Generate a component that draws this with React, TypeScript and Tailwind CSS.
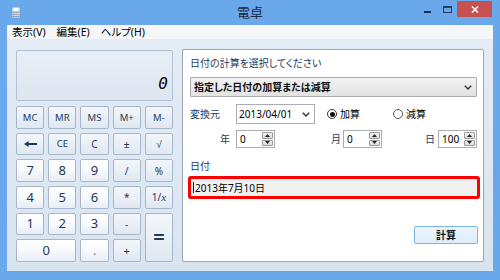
import React from "react";

const JP = "font-['Noto_Sans','Noto_Sans_CJK_JP',sans-serif] [font-feature-settings:'palt']";

function CalcBtn({
  label,
  op = false,
  className = "",
  textClass = "text-[13px]",
}: {
  label: React.ReactNode;
  op?: boolean;
  className?: string;
  textClass?: string;
}) {
  return (
    <div
      className={`flex items-center justify-center rounded-[2px] border border-[#a7b7ca] text-[#1e395b] leading-none ${textClass} ${
        op
          ? "bg-linear-to-b from-[#f3f6fa] via-[#eaf0f7] to-[#dfe7f1]"
          : "bg-linear-to-b from-[#ffffff] via-[#f7f9fc] to-[#e8eef6]"
      } ${className}`}
    >
      {label}
    </div>
  );
}

function Spin({ value }: { value: string }) {
  return (
    <div className="w-[39px] h-[18px] border border-[#abadb3] bg-white flex">
      <span className="flex-1 pl-[3px] text-[10px] leading-[16px] text-black">{value}</span>
      <div className="w-[13px] flex flex-col gap-[1px] p-[1px]">
        <div className="flex-1 rounded-[1px] border border-[#9a9a9a] bg-linear-to-b from-[#f4f4f4] to-[#dcdcdc] flex items-center justify-center">
          <svg width="5" height="3" viewBox="0 0 5 3">
            <polygon points="2.5,0 5,3 0,3" fill="#222" />
          </svg>
        </div>
        <div className="flex-1 rounded-[1px] border border-[#9a9a9a] bg-linear-to-b from-[#f4f4f4] to-[#dcdcdc] flex items-center justify-center">
          <svg width="5" height="3" viewBox="0 0 5 3">
            <polygon points="0,0 5,0 2.5,3" fill="#222" />
          </svg>
        </div>
      </div>
    </div>
  );
}

function Chevron() {
  return (
    <svg width="8" height="5" viewBox="0 0 8 5">
      <polyline points="0.8,0.8 4,4 7.2,0.8" fill="none" stroke="#333" strokeWidth="1.4" />
    </svg>
  );
}

export default function App() {
  return (
    <div className={`w-[500px] h-[280px] bg-[#6aa8ec] flex flex-col px-[7px] pb-[9px] overflow-hidden ${JP}`}>
      {/* Title bar */}
      <div className="h-[26px] grid grid-cols-[1fr_auto_1fr]">
        <div className="pl-[5px] pt-[7px]">
          <svg width="8" height="11" viewBox="0 0 8 11">
            <rect x="0" y="0" width="8" height="11" fill="#dbe8f6" stroke="#7c98b8" strokeWidth="0.8" />
            <rect x="1" y="1" width="6" height="2.5" fill="#ffffff" />
            <rect x="1" y="4.5" width="1.5" height="1.3" fill="#6b8bb0" />
            <rect x="3.3" y="4.5" width="1.5" height="1.3" fill="#6b8bb0" />
            <rect x="5.5" y="4.5" width="1.5" height="1.3" fill="#6b8bb0" />
            <rect x="1" y="6.7" width="1.5" height="1.3" fill="#6b8bb0" />
            <rect x="3.3" y="6.7" width="1.5" height="1.3" fill="#6b8bb0" />
            <rect x="5.5" y="6.7" width="1.5" height="1.3" fill="#e08a3a" />
            <rect x="1" y="8.8" width="1.5" height="1.3" fill="#6b8bb0" />
            <rect x="3.3" y="8.8" width="1.5" height="1.3" fill="#6b8bb0" />
            <rect x="5.5" y="8.8" width="1.5" height="1.3" fill="#6b8bb0" />
          </svg>
        </div>
        <div className="flex items-center text-[13px] text-[#1c2a44] leading-none pb-[1px]">電卓</div>
        <div className="flex justify-end items-start pt-[1px] pr-[1px]">
          <div className="w-[20px] h-[16px] flex items-center justify-center">
            <div className="w-[7px] h-[2px] bg-[#1c2a44] mt-[6px]" />
          </div>
          <div className="w-[20px] h-[16px] flex items-center justify-center">
            <div className="w-[9px] h-[7px] border border-[#2a3b55] border-t-2" />
          </div>
          <div className="w-[35px] h-[16px] bg-[#c75050] flex items-center justify-center">
            <svg width="8" height="7" viewBox="0 0 8 7">
              <path d="M1 0.5 L7 6.5 M7 0.5 L1 6.5" stroke="#fff" strokeWidth="1.6" />
            </svg>
          </div>
        </div>
      </div>

      {/* Menu bar */}
      <div className="h-[15px] bg-[#f5f6f7] border-b border-[#e6ebf1] flex items-center gap-[11px] pl-[5px] text-[10.5px] leading-none text-black">
        <span>表示(V)</span>
        <span>編集(E)</span>
        <span>ヘルプ(H)</span>
      </div>

      {/* Main */}
      <div className="flex-1 bg-linear-to-b from-[#e4ecf5] to-[#d9e4f1] flex gap-[9px] p-[9px]">
        {/* Calculator */}
        <div className="w-[157px] flex flex-col">
          <div className="mt-[1px] h-[51px] rounded-[2px] border border-[#b2c1d3] bg-linear-to-b from-[#e8eef6] to-[#dde6f1] flex items-end justify-end pr-[4px] pb-[8px]">
            <span className="font-['DejaVu_Sans_Mono',monospace] italic text-[16px] leading-none text-black">0</span>
          </div>
          <div className="mt-[5px] h-[156px] grid grid-cols-5 grid-rows-6 gap-x-[4px] gap-y-[4px] font-['Noto_Sans',sans-serif]">
            <CalcBtn label="MC" op textClass="text-[9.5px]" />
            <CalcBtn label="MR" op textClass="text-[9.5px]" />
            <CalcBtn label="MS" op textClass="text-[9.5px]" />
            <CalcBtn label="M+" op textClass="text-[9.5px]" />
            <CalcBtn label="M-" op textClass="text-[9.5px]" />

            <CalcBtn
              op
              label={
                <svg width="13" height="6" viewBox="0 0 13 6">
                  <polygon points="0,3 4.5,0 4.5,2 13,2 13,4 4.5,4 4.5,6" fill="#1e395b" />
                </svg>
              }
            />
            <CalcBtn label="CE" op textClass="text-[9.5px]" />
            <CalcBtn label="C" op textClass="text-[10px]" />
            <CalcBtn label="±" op textClass="text-[10px]" />
            <CalcBtn label="√" op textClass="text-[10px]" />

            <CalcBtn label="7" />
            <CalcBtn label="8" />
            <CalcBtn label="9" />
            <CalcBtn label="/" op textClass="text-[10px]" />
            <CalcBtn label="%" op textClass="text-[10px]" />

            <CalcBtn label="4" />
            <CalcBtn label="5" />
            <CalcBtn label="6" />
            <CalcBtn label="*" op textClass="text-[10px]" />
            <CalcBtn
              op
              textClass="text-[10px]"
              label={
                <span>
                  1/<span className="italic font-['Liberation_Serif',serif] text-[11px]">x</span>
                </span>
              }
            />

            <CalcBtn label="1" />
            <CalcBtn label="2" />
            <CalcBtn label="3" />
            <CalcBtn label="-" op textClass="text-[10px]" />
            <CalcBtn label="=" op className="row-span-2" textClass="text-[20px] font-bold" />

            <CalcBtn label="0" className="col-span-2" />
            <CalcBtn label="." textClass="text-[10px]" />
            <CalcBtn label="+" op textClass="text-[11px]" />
          </div>
        </div>

        {/* Date panel */}
        <div className="w-[302px] bg-white border border-[#9ea9b6] rounded-[2px] shadow-[0_0_1px_rgba(0,0,0,0.15)] flex flex-col pl-[7px] pr-[6px] pt-[5px] text-[10px]">
          <div className="h-[16px] leading-[16px] text-[#1e395b]">日付の計算を選択してください</div>

          <div className="mt-[6px] h-[20px] border border-[#acacac] rounded-[1px] bg-linear-to-b from-[#f2f2f2] to-[#e2e2e2] flex items-center pl-[3px] pr-[4px]">
            <span className="flex-1 font-bold text-[#111] leading-none">指定した日付の加算または減算</span>
            <Chevron />
          </div>

          <div className="mt-[7px] h-[20px] flex items-center">
            <span className="w-[46px] text-[#1e395b] leading-none">変換元</span>
            <div className="w-[79px] h-[20px] border border-[#abadb3] bg-white flex items-center pl-[2px] pr-[4px]">
              <span className="flex-1 leading-none text-black">2013/04/01</span>
              <Chevron />
            </div>
            <div className="ml-[12px] flex items-center">
              <div className="w-[10px] h-[10px] rounded-full border border-[#333] flex items-center justify-center">
                <div className="w-[5px] h-[5px] rounded-full bg-[#111]" />
              </div>
              <span className="ml-[3px] leading-none text-black">加算</span>
            </div>
            <div className="ml-[33px] flex items-center">
              <div className="w-[10px] h-[10px] rounded-full border border-[#555] bg-white" />
              <span className="ml-[3px] leading-none text-black">減算</span>
            </div>
          </div>

          <div className="mt-[6px] h-[18px] flex items-center">
            <span className="ml-[30px] w-[12px] leading-none text-[#1e395b]">年</span>
            <div className="ml-[4px]">
              <Spin value="0" />
            </div>
            <span className="ml-[56px] w-[12px] leading-none text-[#1e395b]">月</span>
            <Spin value="0" />
            <span className="ml-[43px] w-[12px] leading-none text-[#1e395b]">日</span>
            <div className="ml-[1px]">
              <Spin value="100" />
            </div>
          </div>

          <div className="mt-[10px] h-[16px] leading-[16px] text-[#1e395b]">日付</div>

          <div className="mt-[2px] ml-[-2px] mr-[-3px] h-[23px] border-[3px] border-[#ff0000] rounded-[3px] bg-[#f0f0f0] flex items-center pl-[2px]">
            <span className="w-[1px] h-[11px] bg-[#222] mr-[1px]" />
            <span className="leading-none text-black">2013年7月10日</span>
          </div>

          <div className="mt-[27px] self-end mr-[-1px] w-[64px] h-[18px] border border-[#7eb4ea] rounded-[2px] bg-linear-to-b from-[#edf5fd] to-[#dcecfc] flex items-center justify-center">
            <span className="font-bold leading-none text-[#111]">計算</span>
          </div>
        </div>
      </div>
    </div>
  );
}
